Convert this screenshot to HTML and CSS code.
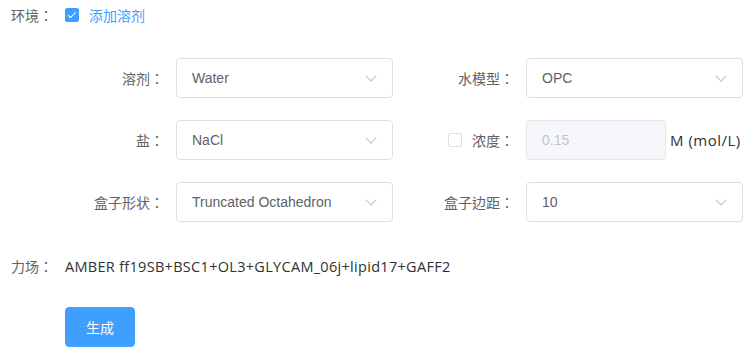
FILE: index.html
```html
<!DOCTYPE html>
<html lang="zh-CN">
  <head>
    <meta charset="UTF-8" />
    <meta name="viewport" content="width=device-width, initial-scale=1.0" />
    <title>溶剂设置</title>
    <link rel="stylesheet" href="styles.css">
  </head>
  <body>
    <form class="form">
      <!-- 环境 -->
      <div class="form-item env-row">
        <label class="form-label" lang="zh-Hant">环境：</label>
        <div class="form-content">
          <label class="checkbox is-checked">
            <span class="checkbox-box"></span>
            <span class="checkbox-text">添加溶剂</span>
          </label>
        </div>
      </div>

      <!-- 溶剂参数 -->
      <div class="solvent-grid">
        <div class="field">
          <label class="field-label" lang="zh-Hant">溶剂：</label>
          <div class="select"><span>Water</span><i class="arrow"></i></div>
        </div>
        <div class="field">
          <label class="field-label" lang="zh-Hant">水模型：</label>
          <div class="select"><span>OPC</span><i class="arrow"></i></div>
        </div>

        <div class="field">
          <label class="field-label" lang="zh-Hant">盐：</label>
          <div class="select"><span>NaCl</span><i class="arrow"></i></div>
        </div>
        <div class="field">
          <label class="field-label" lang="zh-Hant">
            <span class="checkbox-box"></span>
            <span class="concentration-text">浓度：</span>
          </label>
          <div class="input is-disabled">0.15</div>
          <span class="unit">M (mol/L)</span>
        </div>

        <div class="field">
          <label class="field-label" lang="zh-Hant">盒子形状：</label>
          <div class="select"><span>Truncated Octahedron</span><i class="arrow"></i></div>
        </div>
        <div class="field">
          <label class="field-label" lang="zh-Hant">盒子边距：</label>
          <div class="select"><span>10</span><i class="arrow"></i></div>
        </div>
      </div>

      <!-- 力场 -->
      <div class="form-item ff-row">
        <label class="form-label" lang="zh-Hant">力场：</label>
        <div class="form-content ff-text">AMBER ff19SB+BSC1+OL3+GLYCAM_06j+lipid17+GAFF2</div>
      </div>

      <div class="form-item btn-row">
        <label class="form-label"></label>
        <button type="button" class="btn-primary">生成</button>
      </div>
    </form>
  </body>
</html>
```

FILE: styles.css
```css
/* 기본 */
body {
  margin: 0;
  font-family: "Liberation Sans", "Noto Sans CJK SC", sans-serif;
  font-size: 14px;
  color: #606266;
  background: #fff;
}

.form-item {
  display: flex;
  align-items: center;
}

/* 전각 콜론을 가운데에 두기 위해 TC 글꼴 사용 */
.form-label,
.field-label {
  font-family: "Liberation Sans", "Noto Sans CJK TC", sans-serif;
}

.form-label {
  width: 65px;
  box-sizing: border-box;
  padding-right: 12px;
  text-align: right;
  flex-shrink: 0;
}

.env-row {
  height: 30px;
}

/* 체크박스 */
.checkbox {
  display: flex;
  align-items: center;
  cursor: pointer;
}

.checkbox-box {
  display: inline-block;
  width: 14px;
  height: 14px;
  box-sizing: border-box;
  border: 1px solid #dcdfe6;
  border-radius: 2px;
  background: #fff;
  position: relative;
}

.is-checked .checkbox-box {
  background: #409eff;
  border-color: #409eff;
}

.is-checked .checkbox-box::after {
  content: "";
  position: absolute;
  left: 4px;
  top: 1px;
  width: 3px;
  height: 7px;
  border: 1px solid #fff;
  border-left: 0;
  border-top: 0;
  transform: rotate(45deg);
}

.checkbox-text {
  margin-left: 10px;
  color: #409eff;
}

/* 그리드 */
.solvent-grid {
  margin: 28px 0 0 65px;
  display: grid;
  grid-template-columns: 350px 350px;
  row-gap: 22px;
}

.field {
  display: flex;
  align-items: center;
  height: 40px;
}

.field-label {
  width: 111px;
  box-sizing: border-box;
  padding-right: 12px;
  display: flex;
  align-items: center;
  justify-content: flex-end;
}

.concentration-text {
  margin-left: 10px;
}

.select,
.input {
  height: 40px;
  box-sizing: border-box;
  border: 1px solid #dcdfe6;
  border-radius: 4px;
  padding: 0 15px;
  display: flex;
  align-items: center;
  color: #606266;
  background: #fff;
}

.select {
  width: 217px;
  justify-content: space-between;
}

.arrow {
  width: 7px;
  height: 7px;
  border-right: 1px solid #c0c4cc;
  border-bottom: 1px solid #c0c4cc;
  transform: rotate(45deg);
  margin: -5px 2px 0 0;
}

.input {
  width: 140px;
}

.input.is-disabled {
  background: #f5f7fa;
  border-color: #e4e7ed;
  color: #c0c4cc;
}

.unit {
  margin-left: 4px;
  font-family: "Open Sans", sans-serif;
  font-size: 15px;
  letter-spacing: 0.5px;
  color: #303133;
}

/* 역장 */
.ff-row {
  margin-top: 24px;
  height: 40px;
}

.ff-text {
  font-family: "Open Sans", sans-serif;
  font-size: 14.5px;
  letter-spacing: 0.3px;
  color: #303133;
}

.btn-row {
  margin-top: 21px;
}

.btn-primary {
  height: 40px;
  padding: 0 20px;
  font-family: inherit;
  font-size: 14px;
  color: #fff;
  background: #409eff;
  border: 1px solid #409eff;
  border-radius: 4px;
  cursor: pointer;
}
```
